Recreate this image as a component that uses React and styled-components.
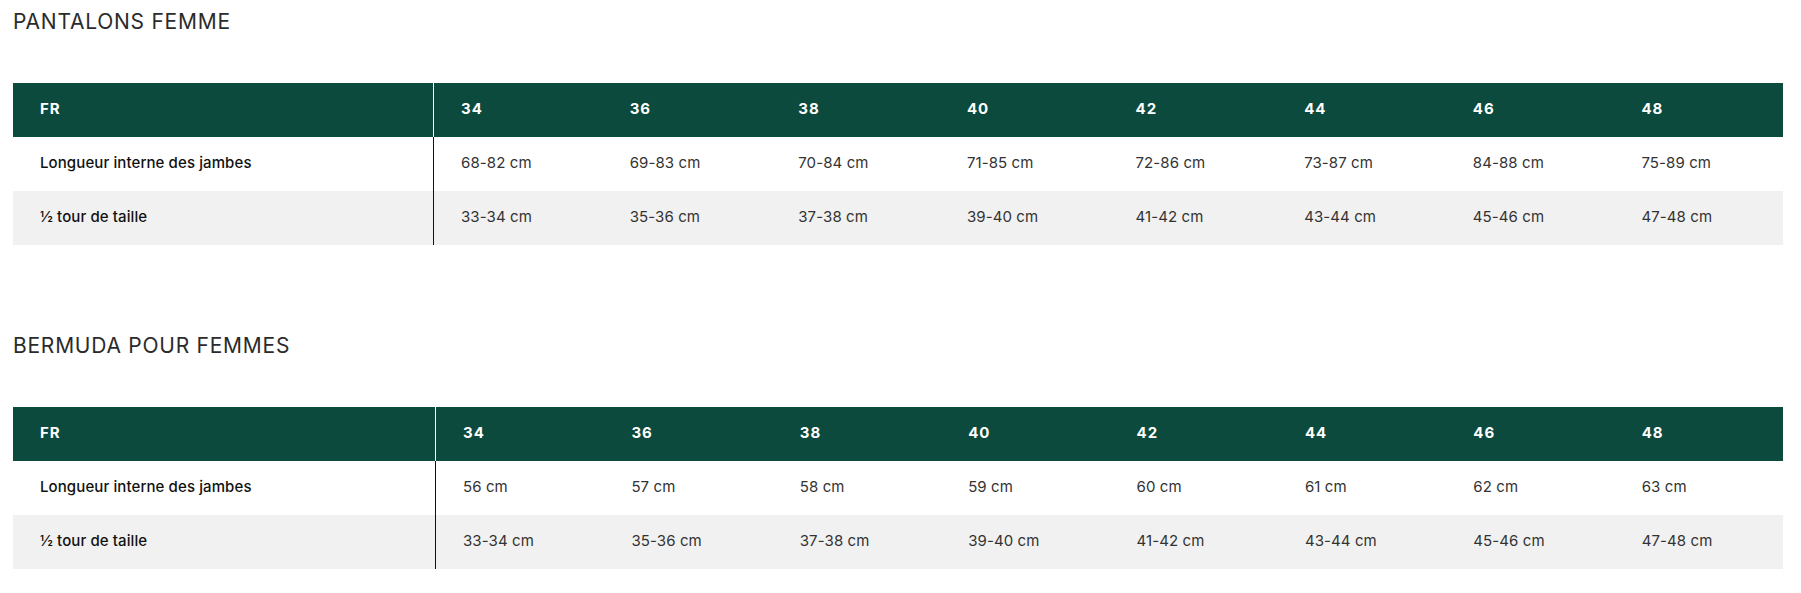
import React from 'react';
import styled, { createGlobalStyle } from 'styled-components';

const GlobalStyle = createGlobalStyle`
  body {
    margin: 0;
    background: #fff;
    font-family: Inter, "Liberation Sans", sans-serif;
  }
`;

const SIZES = ['34', '36', '38', '40', '42', '44', '46', '48'];

const charts = [
  {
    title: 'PANTALONS FEMME',
    firstCol: 421,
    rows: [
      {
        label: 'Longueur interne des jambes',
        values: ['68-82 cm', '69-83 cm', '70-84 cm', '71-85 cm', '72-86 cm', '73-87 cm', '84-88 cm', '75-89 cm'],
      },
      {
        label: '½ tour de taille',
        values: ['33-34 cm', '35-36 cm', '37-38 cm', '39-40 cm', '41-42 cm', '43-44 cm', '45-46 cm', '47-48 cm'],
      },
    ],
  },
  {
    title: 'BERMUDA POUR FEMMES',
    firstCol: 423,
    rows: [
      {
        label: 'Longueur interne des jambes',
        values: ['56 cm', '57 cm', '58 cm', '59 cm', '60 cm', '61 cm', '62 cm', '63 cm'],
      },
      {
        label: '½ tour de taille',
        values: ['33-34 cm', '35-36 cm', '37-38 cm', '39-40 cm', '41-42 cm', '43-44 cm', '45-46 cm', '47-48 cm'],
      },
    ],
  },
];

const SizeChart = ({ title, firstCol, rows }) => (
  <Section>
    <Title>{title}</Title>
    <Table>
      <Row $first={firstCol} $head>
        <LabelCell $head>FR</LabelCell>
        {SIZES.map((s) => (
          <HeadCell key={s}>{s}</HeadCell>
        ))}
      </Row>
      {rows.map((row, i) => (
        <Row key={row.label} $first={firstCol} $striped={i % 2 === 1}>
          <LabelCell>{row.label}</LabelCell>
          {row.values.map((v, j) => (
            <ValueCell key={j}>{v}</ValueCell>
          ))}
        </Row>
      ))}
    </Table>
  </Section>
);

const App = () => (
  <>
    <GlobalStyle />
    <Page>
      {charts.map((c) => (
        <SizeChart key={c.title} {...c} />
      ))}
    </Page>
  </>
);
export default App;

const Page = styled.div`
  padding: 9px 18px 0 13px;
  display: flex;
  flex-direction: column;
  gap: 88px;
`;

const Section = styled.section`
  display: flex;
  flex-direction: column;
  gap: 48px;
`;

const Title = styled.h2`
  margin: 0;
  font-size: 21px;
  line-height: 26px;
  font-weight: 400;
  letter-spacing: 0.75px;
  color: #2b2b2b;
`;

const Table = styled.div`
  width: 1770px;
  display: flex;
  flex-direction: column;
`;

const Row = styled.div`
  display: grid;
  grid-template-columns: ${(p) => p.$first}px repeat(8, 1fr);
  height: 54px;
  background: ${(p) => (p.$head ? '#0b4a3d' : p.$striped ? '#f1f1f1' : '#fff')};
`;

const Cell = styled.div`
  display: flex;
  align-items: center;
  padding: 0 0 3px 27px;
  font-size: 15px;
`;

const LabelCell = styled(Cell)`
  border-right: 1px solid ${(p) => (p.$head ? '#ffffff' : '#111')};
  color: ${(p) => (p.$head ? '#fff' : '#111')};
  font-weight: ${(p) => (p.$head ? 700 : 500)};
  letter-spacing: ${(p) => (p.$head ? '1px' : '0.1px')};
`;

const HeadCell = styled(Cell)`
  color: #fff;
  font-weight: 700;
  letter-spacing: 1px;
`;

const ValueCell = styled(Cell)`
  color: #333;
  font-weight: 400;
  letter-spacing: 0.1px;
`;
